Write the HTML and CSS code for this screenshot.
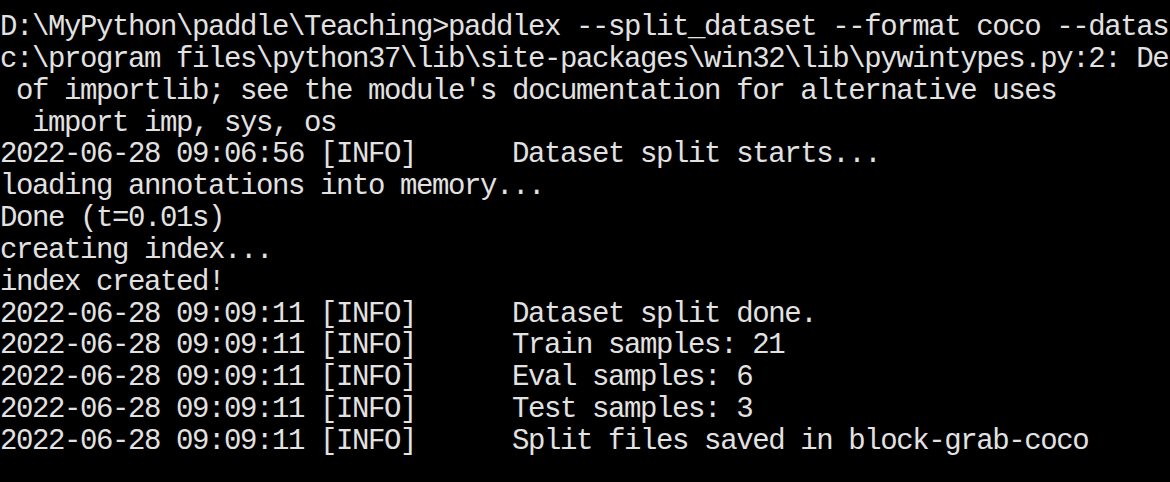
FILE: index.html
```html
<!DOCTYPE html>
<html>
<head>
<meta charset="utf-8">
<link rel="stylesheet" href="styles.css">
</head>
<body>
<pre class="console">D:\MyPython\paddle\Teaching>paddlex --split_dataset --format coco --datas
c:\program files\python37\lib\site-packages\win32\lib\pywintypes.py:2: De
 of importlib; see the module's documentation for alternative uses
  import imp, sys, os
2022-06-28 09:06:56 [INFO]      Dataset split starts...
loading annotations into memory...
Done (t=0.01s)
creating index...
index created!
2022-06-28 09:09:11 [INFO]      Dataset split done.
2022-06-28 09:09:11 [INFO]      Train samples: 21
2022-06-28 09:09:11 [INFO]      Eval samples: 6
2022-06-28 09:09:11 [INFO]      Test samples: 3
2022-06-28 09:09:11 [INFO]      Split files saved in block-grab-coco</pre>
</body>
</html>
```
FILE: styles.css
```css
html, body {
  margin: 0;
  padding: 0;
  background: #000;
  width: 1170px;
  height: 482px;
  overflow: hidden;
}
.console {
  margin: 0;
  padding: 12px 0 0 0;
  font-family: "Liberation Mono", monospace;
  font-size: 29px;
  letter-spacing: -1.4px;
  line-height: 31.85px;
  color: #e2e2e2;
  white-space: pre;
  overflow: hidden;
}
```
